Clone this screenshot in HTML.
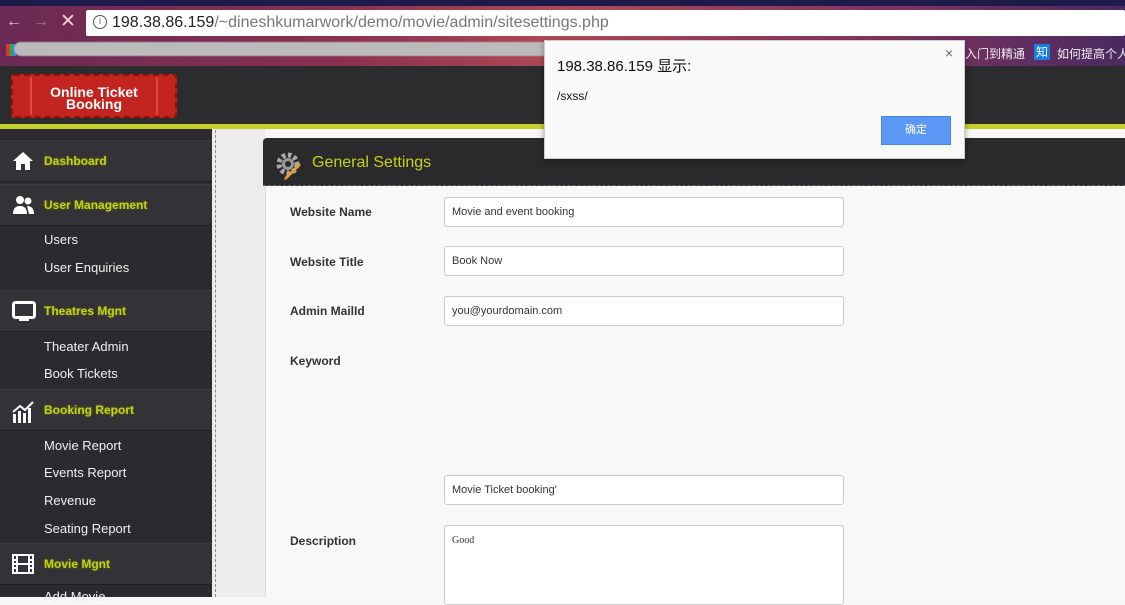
<!DOCTYPE html>
<html><head><meta charset="utf-8">
<style>
*{margin:0;padding:0;box-sizing:border-box}
body{width:1125px;height:597px;overflow:hidden;position:relative;font-family:"Liberation Sans","Noto Sans CJK SC",sans-serif;background:#f7f7f7}
.abs{position:absolute}
#tabs{left:0;top:0;width:1125px;height:6px;background:#1e1a4a}
#bar{left:0;top:6px;width:1125px;height:60px;background:linear-gradient(90deg,#6a2a55 0%,#8a3050 30%,#b04a55 50%,#8a3560 75%,#4a2a60 100%)}
#url{left:86px;top:10px;width:1039px;height:26px;background:#fff;border-radius:2px;font-size:16px;line-height:26px;padding-left:26px;color:#222}
#url span{color:#777}
#hdr{left:0;top:66px;width:1125px;height:58px;background:#2c2c2e}
#line{left:0;top:124px;width:1125px;height:5px;background:#c3cf2a}
#side{left:0;top:129px;width:212px;height:468px;background:#2b2a2e}
#gap{left:212px;top:129px;width:53px;height:468px;background:#ececec}
#dash{left:215px;top:130px;height:467px;border-left:1px dashed #888}
.sh{position:absolute;left:0;width:212px;height:42px;background:#333236;border-top:1px solid #3c3b40;border-bottom:1px solid #1f1e22;color:#c4d21c;font-weight:bold;font-size:12px;line-height:40px;padding-left:44px;text-shadow:0 0 2px #6a7a00}
.si{position:absolute;left:44px;color:#f0f0f0;font-size:13px}
.ic{position:absolute;left:12px;top:10px}
#ph{left:263px;top:138px;width:862px;height:48px;background:#2a2a2c;border-radius:4px 0 0 0;border-bottom:1px dashed #666}
#ph span{position:absolute;left:49px;top:16px;color:#c4d21c;font-size:16px}
#form{left:265px;top:186px;width:860px;height:411px;background:#f8f8f8;border-left:1px solid #ddd}
.lb{position:absolute;left:290px;font-weight:bold;font-size:12px;color:#333}
.in{position:absolute;left:444px;width:400px;height:30px;background:#fff;border:1px solid #ccc;border-radius:3px;font-size:11px;line-height:28px;padding-left:7px;color:#333}
#dlg{left:544px;top:40px;width:421px;height:119px;background:#f9f9f9;border:1px solid #ccc;box-shadow:0 2px 6px rgba(0,0,0,.35)}
#btn{position:absolute;left:336px;top:75px;width:70px;height:29px;background:#5b98f5;border:1px solid #4a86e0;color:#fff;font-size:11px;text-align:center;line-height:27px}
</style></head><body>
<div id="tabs" class="abs"></div>
<div id="bar" class="abs"></div>
<div class="abs" style="left:6px;top:13px;color:#e8c8d0;font-size:16px">←</div>
<div class="abs" style="left:33px;top:13px;color:#b07090;font-size:16px">→</div>
<div class="abs" style="left:60px;top:10px;color:#f0d0d8;font-size:19px">✕</div>
<div id="url" class="abs">198.38.86.159<span>/~dineshkumarwork/demo/movie/admin/sitesettings.php</span></div>
<div class="abs" style="left:93px;top:15px;width:14px;height:14px;border:1.5px solid #555;border-radius:50%;font-size:9px;text-align:center;line-height:11px;color:#555">i</div>
<div class="abs" style="left:6px;top:44px;width:10px;height:12px;background:linear-gradient(90deg,#d33 33%,#3a3 33% 66%,#38d 66%)"></div>
<div class="abs" style="left:14px;top:42px;width:545px;height:14px;background:#bbb;border-radius:7px;filter:blur(0.5px)"></div>
<div class="abs" style="left:965px;top:45px;color:#eee;font-size:12px">入门到精通</div>
<div class="abs" style="left:1034px;top:44px;width:16px;height:16px;background:#1a7ee0;color:#fff;font-size:12px;text-align:center;line-height:16px">知</div>
<div class="abs" style="left:1057px;top:45px;color:#eee;font-size:12px;white-space:nowrap">如何提高个人</div>
<div id="hdr" class="abs"></div>
<div class="abs" style="left:11px;top:74px;width:166px;height:44px;background:#c42420;border:2px dashed #8a1510;border-radius:3px"></div>
<div class="abs" style="left:30px;top:77px;width:128px;height:38px;border-left:2px solid #d84a40;border-right:2px solid #d84a40;color:#fff;font-weight:bold;font-size:14px;line-height:12px;text-align:center;padding-top:9px">Online Ticket<br>Booking</div>
<div id="line" class="abs"></div>
<div id="side" class="abs">
<div class="sh" style="top:11px"><svg class="ic" width="22" height="20" viewBox="0 0 22 20"><path d="M11 1L1 10h3v9h5v-6h4v6h5v-9h3z" fill="#fff"/></svg>Dashboard</div>
<div class="sh" style="top:55px"><svg class="ic" width="24" height="20" viewBox="0 0 24 20"><circle cx="8" cy="5" r="4" fill="#fff"/><circle cx="16" cy="6" r="3.5" fill="#fff"/><path d="M1 19c0-6 3-8 7-8s7 2 7 8zM15 11c4 0 7 2 7 8h-5" fill="#fff"/></svg>User Management</div>
<div class="si" style="top:103px">Users</div>
<div class="si" style="top:131px">User Enquiries</div>
<div class="sh" style="top:161px"><svg class="ic" width="24" height="22" viewBox="0 0 24 22"><rect x="1.5" y="1.5" width="21" height="15" rx="2" fill="none" stroke="#fff" stroke-width="3"/><rect x="7" y="18" width="10" height="2" fill="#fff"/></svg>Theatres Mgnt</div>
<div class="si" style="top:210px">Theater Admin</div>
<div class="si" style="top:237px">Book Tickets</div>
<div class="sh" style="top:260px"><svg class="ic" width="24" height="24" viewBox="0 0 24 24"><rect x="1" y="14" width="3" height="9" fill="#fff"/><rect x="6" y="11" width="3" height="12" fill="#fff"/><rect x="11" y="13" width="3" height="10" fill="#fff"/><rect x="16" y="8" width="3" height="15" fill="#fff"/><path d="M1 12l7-6 5 4 8-8" stroke="#fff" stroke-width="2" fill="none"/></svg>Booking Report</div>
<div class="si" style="top:309px">Movie Report</div>
<div class="si" style="top:336px">Events Report</div>
<div class="si" style="top:364px">Revenue</div>
<div class="si" style="top:392px">Seating Report</div>
<div class="sh" style="top:414px"><svg class="ic" width="22" height="20" viewBox="0 0 22 20"><rect x="1" y="1" width="20" height="18" fill="none" stroke="#fff" stroke-width="2"/><path d="M5 1v18M17 1v18M1 6h4M1 10h4M1 14h4M17 6h4M17 10h4M17 14h4M5 10h12" stroke="#fff" stroke-width="2"/></svg>Movie Mgnt</div>
<div class="si" style="top:460px">Add Movie</div>
</div>
<div id="gap" class="abs"></div>
<div id="dash" class="abs"></div>
<div id="ph" class="abs"><svg class="abs" style="left:12px;top:13px" width="30" height="30" viewBox="0 0 30 30"><circle cx="13" cy="13" r="9" fill="none" stroke="#aaa" stroke-width="5" stroke-dasharray="3.5 2.5"/><circle cx="13" cy="13" r="6" fill="#999"/><circle cx="13" cy="13" r="3" fill="#2a2a2c"/><path d="M26 14L12 28l-3 1 1-3L24 12z" fill="#e8a030"/></svg><span>General Settings</span></div>
<div id="form" class="abs"></div>
<div class="lb" style="top:205px">Website Name</div>
<div class="in" style="top:197px">Movie and event booking</div>
<div class="lb" style="top:255px">Website Title</div>
<div class="in" style="top:246px">Book Now</div>
<div class="lb" style="top:304px">Admin MailId</div>
<div class="in" style="top:296px">you@yourdomain.com</div>
<div class="lb" style="top:354px">Keyword</div>
<div class="in" style="top:475px">Movie Ticket booking'</div>
<div class="lb" style="top:534px">Description</div>
<div class="in" style="top:525px;height:80px;line-height:14px;padding-top:8px;font-family:'Liberation Serif',serif;font-size:10px">Good</div>
<div id="dlg" class="abs">
<div class="abs" style="left:12px;top:14px;font-size:15px;color:#111">198.38.86.159 显示:</div>
<div class="abs" style="left:12px;top:48px;font-size:12px;color:#111">/sxss/</div>
<div class="abs" style="left:400px;top:4px;font-size:14px;color:#666">×</div>
<div id="btn">确定</div>
</div>
</body></html>
